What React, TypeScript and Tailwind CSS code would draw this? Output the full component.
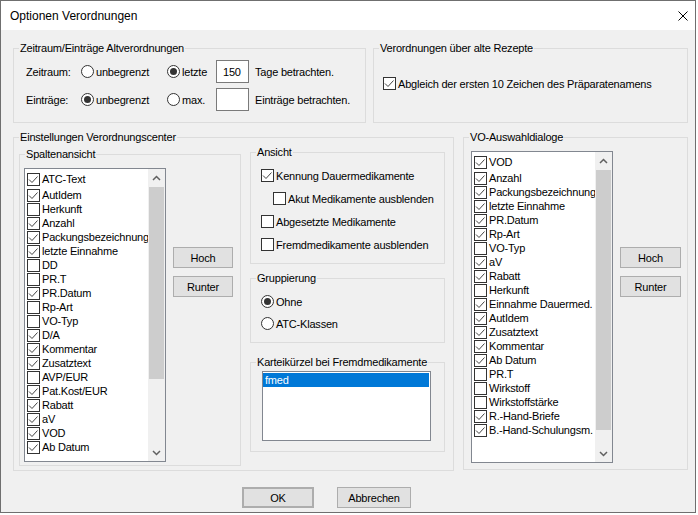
import React from 'react';

type Item = [string, boolean];

const columnItems: Item[] = [
  ['ATC-Text', true],
  ['AutIdem', true],
  ['Herkunft', false],
  ['Anzahl', true],
  ['Packungsbezeichnung', true],
  ['letzte Einnahme', true],
  ['DD', false],
  ['PR.T', false],
  ['PR.Datum', true],
  ['Rp-Art', false],
  ['VO-Typ', false],
  ['D/A', true],
  ['Kommentar', true],
  ['Zusatztext', true],
  ['AVP/EUR', false],
  ['Pat.Kost/EUR', true],
  ['Rabatt', true],
  ['aV', true],
  ['VOD', true],
  ['Ab Datum', true],
];

const dialogItems: Item[] = [
  ['VOD', true],
  ['Anzahl', true],
  ['Packungsbezeichnung', true],
  ['letzte Einnahme', true],
  ['PR.Datum', true],
  ['Rp-Art', true],
  ['VO-Typ', false],
  ['aV', true],
  ['Rabatt', true],
  ['Herkunft', false],
  ['Einnahme Dauermed.', true],
  ['AutIdem', true],
  ['Zusatztext', true],
  ['Kommentar', true],
  ['Ab Datum', true],
  ['PR.T', false],
  ['Wirkstoff', false],
  ['Wirkstoffstärke', false],
  ['R.-Hand-Briefe', true],
  ['B.-Hand-Schulungsm.', true],
];

const Check = ({ checked }: { checked?: boolean }) => (
  <span className="w-[13px] h-[13px] shrink-0 border border-[#333] bg-white flex items-center justify-center">
    {checked && (
      <svg width="11" height="11" viewBox="0 0 11 11">
        <path d="M1 5.5 L4 8.5 L9.5 2.5" fill="none" stroke="#444" strokeWidth="1" />
      </svg>
    )}
  </span>
);

const Radio = ({ checked }: { checked?: boolean }) => (
  <span className="w-[13px] h-[13px] shrink-0 rounded-full border border-[#333] bg-white flex items-center justify-center">
    {checked && <span className="w-[7px] h-[7px] rounded-full bg-[#333]" />}
  </span>
);

const Group = ({ title, className = '', children }: { title: string; className?: string; children?: React.ReactNode }) => (
  <fieldset className={`border border-[#dcdcdc] shrink-0 min-w-0 ${className}`}>
    <legend className="ml-[5px] px-[1px] leading-[16px] whitespace-nowrap">{title}</legend>
    {children}
  </fieldset>
);

const Btn = ({ children, className = '' }: { children: React.ReactNode; className?: string }) => (
  <button className={`h-[21px] bg-[#e1e1e1] border border-[#adadad] flex items-center justify-center leading-[14px] ${className}`}>
    {children}
  </button>
);

const Chevron = ({ up }: { up?: boolean }) => (
  <svg width="9" height="6" viewBox="0 0 9 6">
    <path d={up ? 'M1 5 L4.5 1.5 L8 5' : 'M1 1 L4.5 4.5 L8 1'} fill="none" stroke="#606060" strokeWidth="1.5" />
  </svg>
);

const ScrollBar = ({ thumb }: { thumb: string }) => (
  <div className="w-[17px] h-full shrink-0 bg-[#f0f0f0] flex flex-col">
    <div className="h-[17px] flex items-center justify-center">
      <Chevron up />
    </div>
    <div className="flex-1 px-[1px]">
      <div className={`bg-[#cdcdcd] ${thumb}`} />
    </div>
    <div className="h-[17px] flex items-center justify-center">
      <Chevron />
    </div>
  </div>
);

const CheckList = ({ items, className, thumb }: { items: Item[]; className: string; thumb: string }) => (
  <div className={`bg-white border border-[#828790] flex shrink-0 ${className}`}>
    <div className="flex-1 min-w-0 overflow-hidden pt-[3px] pl-[2px]">
      {items.map(([label, on], i) => (
        <div key={i} className={`flex items-center h-[14px] gap-[2px] whitespace-nowrap ${i === 0 ? 'mb-[2px]' : ''}`}>
          <Check checked={on} />
          <span className="leading-[14px]">{label}</span>
        </div>
      ))}
    </div>
    <ScrollBar thumb={thumb} />
  </div>
);

const CheckRow = ({ checked, label, className = '' }: { checked?: boolean; label: string; className?: string }) => (
  <div className={`flex items-center h-[13px] gap-[2px] whitespace-nowrap ${className}`}>
    <Check checked={checked} />
    <span>{label}</span>
  </div>
);

const RadioRow = ({ checked, label }: { checked?: boolean; label: string }) => (
  <div className="flex items-center h-[13px] gap-[2px] whitespace-nowrap">
    <Radio checked={checked} />
    <span>{label}</span>
  </div>
);

export default function App() {
  return (
    <div className="w-[698px] h-[515px] bg-white font-['Liberation_Sans',Arial,sans-serif] text-[11px] tracking-[-0.2px] leading-[16px] text-black">
      <div className="w-[696px] h-[513px] border border-[#6f6f6f] bg-[#f0f0f0] flex flex-col">
        {/* Title bar */}
        <div className="h-[29px] shrink-0 bg-white flex items-center justify-between pl-[9px] pr-[7px]">
          <span className="text-[12px] tracking-normal">Optionen Verordnungen</span>
          <svg width="10" height="10" viewBox="0 0 10 10">
            <path d="M0.5 0.5 L9.5 9.5 M9.5 0.5 L0.5 9.5" stroke="#000" strokeWidth="1" />
          </svg>
        </div>

        <div className="flex-1 pl-[12px] pt-[10px] flex flex-col">
          {/* Top row */}
          <div className="flex gap-[7px]">
            <Group title="Zeitraum/Einträge Altverordnungen" className="w-[353px] h-[83px]">
              <div className="pt-[4px] pl-[12px] flex flex-col gap-[5px] whitespace-nowrap">
                <div className="flex items-center h-[23px]">
                  <span className="w-[55px]">Zeitraum:</span>
                  <label className="w-[86px] flex items-center gap-[2px]">
                    <Radio />
                    unbegrenzt
                  </label>
                  <label className="w-[49px] flex items-center gap-[2px]">
                    <Radio checked />
                    letzte
                  </label>
                  <span className="w-[33px] h-[23px] bg-white border border-[#7a7a7a] pl-[6px] flex items-center">150</span>
                  <span className="ml-[6px]">Tage betrachten.</span>
                </div>
                <div className="flex items-center h-[23px]">
                  <span className="w-[55px]">Einträge:</span>
                  <label className="w-[86px] flex items-center gap-[2px]">
                    <Radio checked />
                    unbegrenzt
                  </label>
                  <label className="w-[49px] flex items-center gap-[2px]">
                    <Radio />
                    max.
                  </label>
                  <span className="w-[33px] h-[23px] bg-white border border-[#7a7a7a]" />
                  <span className="ml-[6px]">Einträge betrachten.</span>
                </div>
              </div>
            </Group>
            <Group title="Verordnungen über alte Rezepte" className="w-[315px] h-[83px]">
              <div className="pt-[21px] pl-[9px]">
                <CheckRow checked label="Abgleich der ersten 10 Zeichen des Präparatenamens" />
              </div>
            </Group>
          </div>

          {/* Middle row */}
          <div className="mt-[6px] flex items-start gap-[9px]">
            <Group title="Einstellungen Verordnungscenter" className="w-[441px] h-[342px]">
              <div className="flex items-start pl-[5px]">
                <Group title="Spaltenansicht" className="mt-[1px] w-[222px] h-[320px]">
                  <div className="flex items-start pl-[4px]">
                    <CheckList items={columnItems} className="mt-[6px] w-[142px] h-[294px]" thumb="mt-[1px] h-[192px]" />
                    <div className="ml-[7px] mt-[85px] flex flex-col gap-[8px]">
                      <Btn className="w-[60px]">Hoch</Btn>
                      <Btn className="w-[60px]">Runter</Btn>
                    </div>
                  </div>
                </Group>

                <div className="ml-[9px] -mt-[1px] w-[195px] flex flex-col">
                  <Group title="Ansicht" className="w-[195px] h-[120px]">
                    <div className="pt-[9px] pl-[10px] flex flex-col gap-[10px]">
                      <CheckRow checked label="Kennung Dauermedikamente" />
                      <CheckRow label="Akut Medikamente ausblenden" className="ml-[12px]" />
                      <CheckRow label="Abgesetzte Medikamente" />
                      <CheckRow label="Fremdmedikamente ausblenden" />
                    </div>
                  </Group>
                  <Group title="Gruppierung" className="mt-[6px] w-[195px] h-[73px]">
                    <div className="pt-[9px] pl-[10px] flex flex-col gap-[9px]">
                      <RadioRow checked label="Ohne" />
                      <RadioRow label="ATC-Klassen" />
                    </div>
                  </Group>
                  <Group title="Karteikürzel bei Fremdmedikamente" className="mt-[11px] w-[195px] h-[98px]">
                    <div className="mt-[1px] ml-[11px] w-[169px] h-[70px] bg-white border border-[#828790]">
                      <div className="mt-[1px] mr-[1px] h-[14px] bg-[#0078d7] text-white pl-[2px] leading-[14px]">fmed</div>
                    </div>
                  </Group>
                </div>
              </div>
            </Group>

            <Group title="VO-Auswahldialoge" className="w-[225px] h-[341px]">
              <div className="flex items-start pl-[7px]">
                <CheckList items={dialogItems} className="mt-[6px] w-[142px] h-[312px]" thumb="mt-[1px] h-[260px]" />
                <div className="ml-[7px] mt-[102px] flex flex-col gap-[8px]">
                  <Btn className="w-[61px]">Hoch</Btn>
                  <Btn className="w-[61px]">Runter</Btn>
                </div>
              </div>
            </Group>
          </div>

          {/* Buttons */}
          <div className="mt-[16px] ml-[229px] flex gap-[23px]">
            <Btn className="w-[72px] border-2 border-[#0078d7]">OK</Btn>
            <Btn className="w-[74px]">Abbrechen</Btn>
          </div>
        </div>
      </div>
    </div>
  );
}
